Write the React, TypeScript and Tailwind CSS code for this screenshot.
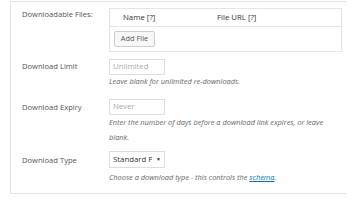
import React from "react";

export default function App() {
  const font = { fontFamily: '"Open Sans", "Liberation Sans", sans-serif' };
  return (
    <div className="w-[360px] h-[210px] bg-white overflow-hidden" style={font}>
      <div className="ml-[10px] mt-px w-[337px] h-[193px] border-l border-t border-b border-[#e5e5e5] text-[#555]">
        <div className="flex pt-[6px]">
          <div className="w-[98px] pl-[11px] pt-[1px] text-[7.6px] leading-[10px]">Downloadable Files:</div>
          <div className="w-[233px] border border-[#e5e5e5]">
            <div className="flex h-[18px] items-center border-b border-[#e5e5e5] text-[7.8px] text-[#333]">
              <div className="w-[101px] pl-[13px]">Name [?]</div>
              <div className="pl-[6px]">File URL [?]</div>
            </div>
            <div className="h-[24px] flex items-center pl-[4px]">
              <div className="h-[16px] w-[41px] flex items-center justify-center border border-[#ccc] bg-[#f7f7f7] rounded-[2px] text-[7.4px] text-[#555]">Add File</div>
            </div>
          </div>
        </div>
        <div className="flex mt-[7px]">
          <div className="w-[98px] pl-[11px] pt-[2px] text-[7.6px] leading-[10px]">Download Limit</div>
          <div>
            <div className="h-[16px] w-[56px] border border-[#ddd] flex items-center pl-[3px] text-[7.8px] text-[#aaa]">Unlimited</div>
            <div className="mt-px text-[7.4px] leading-[10px] italic text-[#666]">Leave blank for unlimited re-downloads.</div>
          </div>
        </div>
        <div className="flex mt-[13px]">
          <div className="w-[98px] pl-[11px] pt-[3px] text-[7.6px] leading-[10px]">Download Expiry</div>
          <div>
            <div className="h-[16px] w-[56px] border border-[#ddd] flex items-center pl-[3px] text-[7.8px] text-[#aaa]">Never</div>
            <div className="w-[228px] text-[7.4px] leading-[15px] italic text-[#666]">Enter the number of days before a download link expires, or leave blank.</div>
          </div>
        </div>
        <div className="flex mt-[6px]">
          <div className="w-[98px] pl-[11px] pt-[4px] text-[7.6px] leading-[10px]">Download Type</div>
          <div>
            <div className="h-[17px] w-[56px] border border-[#ddd] flex items-center pl-[3px] text-[7.8px] text-[#333] whitespace-nowrap">
              <span className="w-[39px] shrink-0 overflow-hidden">Standard Product</span>
              <span className="ml-[4px] text-[5px]">▼</span>
            </div>
            <div className="mt-[4px] text-[7.4px] leading-[10px] italic text-[#666]">Choose a download type - this controls the <span className="text-[#0073aa] underline">schema</span>.</div>
          </div>
        </div>
      </div>
    </div>
  );
}
